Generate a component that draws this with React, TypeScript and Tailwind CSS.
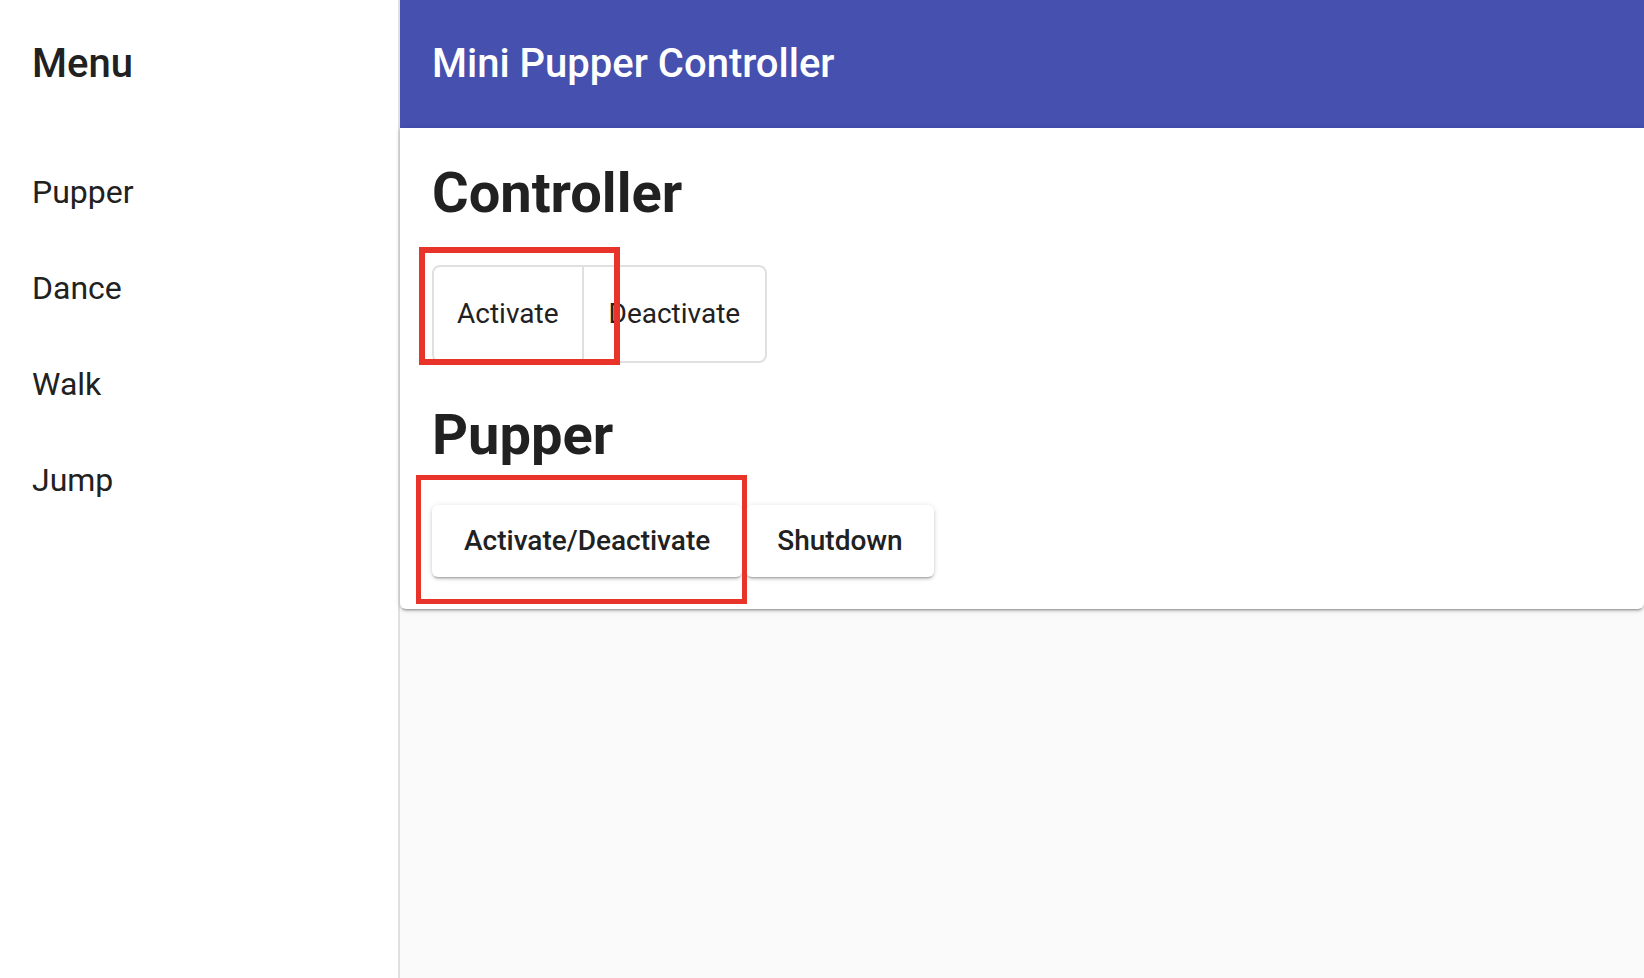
import React from "react";

const font = { fontFamily: "Roboto, 'Noto Sans', Arial, sans-serif" };

export default function App() {
  const items = ["Pupper", "Dance", "Walk", "Jump"];
  return (
    <div className="relative flex h-[978px] w-full overflow-hidden bg-[#fafafa] text-[#212121]" style={font}>
      <aside className="flex w-[400px] shrink-0 flex-col border-r-2 border-[#e0e0e0] bg-white">
        <div className="flex h-[128px] items-center pl-8">
          <h2 className="text-[40px] font-medium leading-[48px]">Menu</h2>
        </div>
        <ul className="py-4">
          {items.map((it) => (
            <li key={it} className="flex h-[96px] items-center pl-8 text-[32px] leading-[96px]">
              {it}
            </li>
          ))}
        </ul>
      </aside>
      <main className="flex min-w-0 flex-1 flex-col">
        <header className="flex h-[128px] shrink-0 items-center bg-[#4550af] pl-8">
          <h1 className="text-[40px] font-medium leading-[48px] text-white">Mini Pupper Controller</h1>
        </header>
        <section className="rounded-b-md bg-white pb-[32px] pl-8 pt-[29px] shadow-[0_3px_2px_-2px_rgba(0,0,0,0.25),0_2px_3px_0_rgba(0,0,0,0.14),0_1px_6px_0_rgba(0,0,0,0.12)]">
          <h2 className="text-[56px] font-bold leading-[72px]">Controller</h2>
          <div className="mt-[36px] flex w-fit divide-x-2 divide-[#e0e0e0] rounded-lg border-2 border-[#e0e0e0]">
            <button className="h-[94px] px-[23px] text-[28px] text-[#212121]">Activate</button>
            <button className="h-[94px] px-[25px] text-[28px] text-[#212121]">Deactivate</button>
          </div>
          <h2 className="mt-[36px] text-[56px] font-bold leading-[72px]">Pupper</h2>
          <div className="mt-[34px] flex gap-1">
            <button className="h-[72px] rounded-md bg-white px-[32px] text-[28px] font-medium text-[#212121] shadow-[0_3px_2px_-2px_rgba(0,0,0,0.2),0_2px_3px_0_rgba(0,0,0,0.14),0_1px_6px_0_rgba(0,0,0,0.12)]">
              Activate/Deactivate
            </button>
            <button className="h-[72px] rounded-md bg-white px-[31px] text-[28px] font-medium text-[#212121] shadow-[0_3px_2px_-2px_rgba(0,0,0,0.2),0_2px_3px_0_rgba(0,0,0,0.14),0_1px_6px_0_rgba(0,0,0,0.12)]">
              Shutdown
            </button>
          </div>
        </section>
      </main>
      <div className="pointer-events-none absolute left-[419px] top-[247px] h-[118px] w-[201px] border-[6px] border-[#e8332a]" />
      <div className="pointer-events-none absolute left-[416px] top-[475px] h-[129px] w-[331px] border-[5px] border-[#e8332a]" />
    </div>
  );
}
